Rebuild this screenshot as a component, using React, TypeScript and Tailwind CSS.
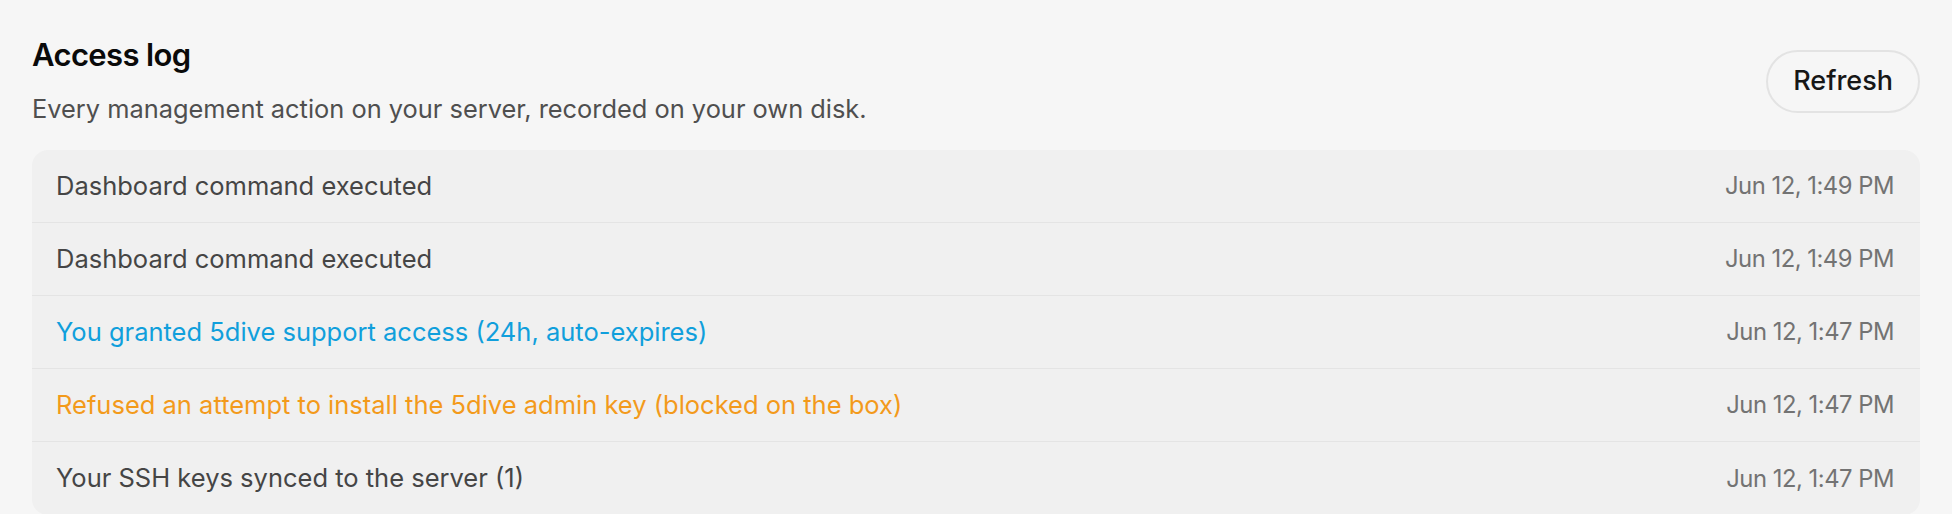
import { type ReactNode } from "react";

type Tone = "default" | "info" | "warn";

type LogEntry = {
    id: number;
    message: string;
    at: string;
    tone: Tone;
};

const entries: LogEntry[] = [
    { id: 1, message: "Dashboard command executed", at: "Jun 12, 1:49 PM", tone: "default" },
    { id: 2, message: "Dashboard command executed", at: "Jun 12, 1:49 PM", tone: "default" },
    { id: 3, message: "You granted 5dive support access (24h, auto-expires)", at: "Jun 12, 1:47 PM", tone: "info" },
    { id: 4, message: "Refused an attempt to install the 5dive admin key (blocked on the box)", at: "Jun 12, 1:47 PM", tone: "warn" },
    { id: 5, message: "Your SSH keys synced to the server (1)", at: "Jun 12, 1:47 PM", tone: "default" },
];

const toneClass: Record<Tone, string> = {
    default: "text-[#454545]",
    info: "text-[#109fdc]",
    warn: "text-[#f39a1b]",
};

function LogRow({ entry, children }: { entry: LogEntry; children?: ReactNode }) {
    return (
        <li className="flex items-center justify-between h-[73px] pl-[24px] pr-[26px] border-b border-[#e4e4e4] last:border-b-0">
            <span className={`text-[25.5px] ${toneClass[entry.tone]}`}>{entry.message}</span>
            <span className="text-[23.8px] tracking-[-0.02em] text-[#737373]">{entry.at}</span>
            {children}
        </li>
    );
}

export default function App() {
    return (
        <div className="min-h-screen w-full bg-[#f6f6f6] px-8 pt-[37px] font-['Inter',sans-serif]">
            {/* Header */}
            <div className="flex items-center justify-between">
                <div>
                    <h2 className="text-[31px] leading-[36px] font-semibold tracking-[-0.02em] text-[#0a0a0a]">
                        Access log
                    </h2>
                    <p className="mt-[20px] text-[25.4px] leading-[32px] text-[#4f4f4f]">
                        Every management action on your server, recorded on your own disk.
                    </p>
                </div>
                <button className="h-[63px] px-[25px] rounded-full border-2 border-[#e3e3e3] bg-[#f6f6f6] text-[27px] font-medium text-[#171717]">
                    Refresh
                </button>
            </div>

            {/* Entries */}
            <ul className="mt-[25px] rounded-[16px] bg-[#f0f0f0] overflow-hidden">
                {entries.map((e) => (
                    <LogRow key={e.id} entry={e} />
                ))}
            </ul>
        </div>
    );
}
